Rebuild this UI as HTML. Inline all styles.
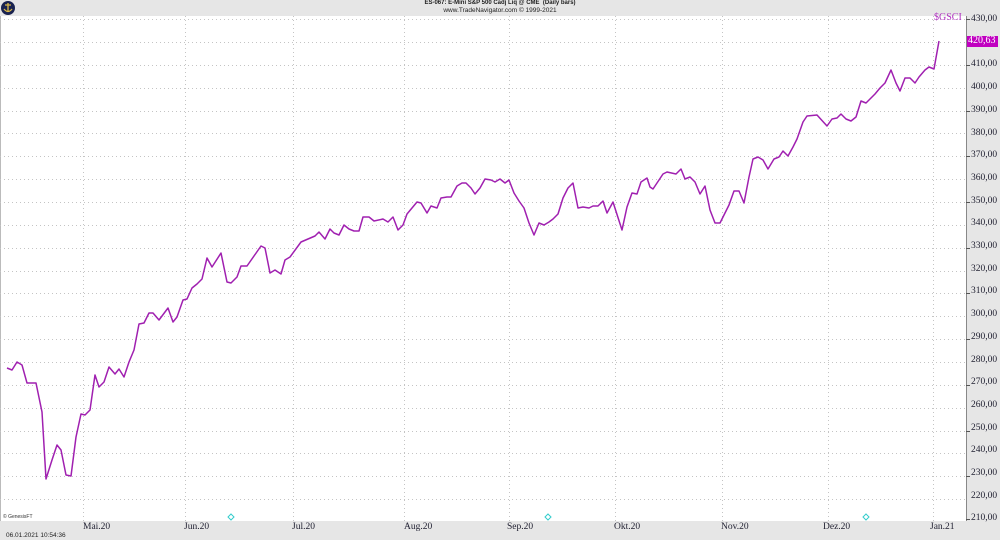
<!DOCTYPE html>
<html><head><meta charset="utf-8"><style>
body{margin:0;width:1000px;height:540px;overflow:hidden;background:#e6e6e6;position:relative;font-family:"Liberation Serif",serif}
.t{position:absolute;white-space:nowrap}
</style></head><body>
<svg width="1000" height="540" style="position:absolute;left:0;top:0" xmlns="http://www.w3.org/2000/svg">
<rect x="0" y="0" width="1000" height="540" fill="#e6e6e6"/>
<rect x="0" y="16" width="966" height="505" fill="#fff"/>
<line x1="0.5" y1="16" x2="0.5" y2="521" stroke="#bbb" stroke-width="1"/>
<line x1="966.5" y1="16" x2="966.5" y2="521" stroke="#888" stroke-width="1"/>
<g stroke="#c4c4c4" stroke-width="1" stroke-dasharray="1,3">
<line x1="0" x2="966" y1="19.5" y2="19.5"/><line x1="0" x2="966" y1="42.5" y2="42.5"/><line x1="0" x2="966" y1="65.5" y2="65.5"/><line x1="0" x2="966" y1="88.5" y2="88.5"/><line x1="0" x2="966" y1="111.5" y2="111.5"/><line x1="0" x2="966" y1="133.5" y2="133.5"/><line x1="0" x2="966" y1="156.5" y2="156.5"/><line x1="0" x2="966" y1="179.5" y2="179.5"/><line x1="0" x2="966" y1="202.5" y2="202.5"/><line x1="0" x2="966" y1="225.5" y2="225.5"/><line x1="0" x2="966" y1="248.5" y2="248.5"/><line x1="0" x2="966" y1="271.5" y2="271.5"/><line x1="0" x2="966" y1="293.5" y2="293.5"/><line x1="0" x2="966" y1="316.5" y2="316.5"/><line x1="0" x2="966" y1="339.5" y2="339.5"/><line x1="0" x2="966" y1="362.5" y2="362.5"/><line x1="0" x2="966" y1="385.5" y2="385.5"/><line x1="0" x2="966" y1="408.5" y2="408.5"/><line x1="0" x2="966" y1="431.5" y2="431.5"/><line x1="0" x2="966" y1="453.5" y2="453.5"/><line x1="0" x2="966" y1="476.5" y2="476.5"/><line x1="0" x2="966" y1="499.5" y2="499.5"/>
<line y1="16" y2="521" x1="83.5" x2="83.5"/><line y1="16" y2="521" x1="185.5" x2="185.5"/><line y1="16" y2="521" x1="293.5" x2="293.5"/><line y1="16" y2="521" x1="404.5" x2="404.5"/><line y1="16" y2="521" x1="509.5" x2="509.5"/><line y1="16" y2="521" x1="615.5" x2="615.5"/><line y1="16" y2="521" x1="722.5" x2="722.5"/><line y1="16" y2="521" x1="828.5" x2="828.5"/><line y1="16" y2="521" x1="933.5" x2="933.5"/>
</g>
<g stroke="#555" stroke-width="1">
<line x1="966" x2="970" y1="19.5" y2="19.5"/><line x1="966" x2="970" y1="65.5" y2="65.5"/><line x1="966" x2="970" y1="111.5" y2="111.5"/><line x1="966" x2="970" y1="156.5" y2="156.5"/><line x1="966" x2="970" y1="202.5" y2="202.5"/><line x1="966" x2="970" y1="248.5" y2="248.5"/><line x1="966" x2="970" y1="293.5" y2="293.5"/><line x1="966" x2="970" y1="339.5" y2="339.5"/><line x1="966" x2="970" y1="385.5" y2="385.5"/><line x1="966" x2="970" y1="431.5" y2="431.5"/><line x1="966" x2="970" y1="476.5" y2="476.5"/><line x1="966" x2="970" y1="519.5" y2="519.5"/>
</g>
<polyline fill="none" stroke="#a020b0" stroke-width="1.5" stroke-linejoin="round" points="7,368 12,370 17,362 22,365 27,383 36,383 42,412 46,479 52,460 57,445 61,450 66,475 71,476 76,437 81,414 85,415 90,410 95,375 99,387 104,382 109,367 115,374 119,369 124,377 129,362 134,350 139,324 144,323 149,313 153,313 159,320 168,308 173,322 177,317 183,300 187,299 192,288 197,284 202,279 207,258 212,267 221,253 227,282 231,283 237,277 241,266 247,266 261,246 265,248 270,273 275,270 281,274 285,260 290,257 301,242 315,236 319,232 325,239 330,229 334,233 339,235 344,225 349,229 354,231 359,231 363,217 369,217 374,221 383,219 388,222 393,217 398,230 403,225 407,214 412,208 417,202 421,203 427,213 431,206 437,208 441,198 447,197 451,197 457,186 462,183 466,183 471,188 475,194 480,188 485,179 491,180 495,182 500,179 505,183 509,180 514,193 519,201 524,208 529,223 534,235 539,223 544,225 549,222 553,219 558,214 563,198 568,188 573,183 578,208 583,207 589,208 593,206 598,206 603,201 607,213 613,202 622,230 627,207 632,193 637,194 641,182 647,178 650,187 653,189 663,174 667,172 676,174 681,169 685,179 690,177 695,182 700,194 705,186 710,210 715,223 720,223 729,205 734,191 739,191 744,203 749,177 753,159 758,157 763,160 768,169 774,159 779,157 783,151 788,156 793,147 797,139 803,122 807,116 817,115 827,126 832,119 837,118 841,114 846,119 851,121 856,117 861,101 866,103 870,99 875,94 880,88 885,83 891,70 896,83 900,91 905,78 910,78 915,83 919,77 925,70 929,67 934,69 939,41"/>
<g fill="none" stroke="#3cc" stroke-width="1">
<path d="M231,514 l3,3 -3,3 -3,-3z"/><path d="M548,514 l3,3 -3,3 -3,-3z"/><path d="M866,514 l3,3 -3,3 -3,-3z"/>
</g>
<circle cx="8" cy="8" r="7" fill="#1a2350"/>
<path d="M8,3 v9 M5,5 h6 M4,9 q4,5 8,0" stroke="#d9b84a" stroke-width="1.3" fill="none"/>
<rect x="967" y="36" width="31" height="11" fill="#c000c0"/>
</svg>
<div class="t" style="left:0;width:1000px;top:0;text-align:center;font:bold 6px 'Liberation Sans',sans-serif;color:#222">ES-067: E-Mini S&amp;P 500 Cadj Liq @ CME&nbsp; (Daily bars)</div>
<div class="t" style="left:0;width:1000px;top:7px;text-align:center;font:6.5px 'Liberation Sans',sans-serif;color:#222">www.TradeNavigator.com © 1999-2021</div>
<div class="t" style="left:934px;top:12px;font-size:10px;color:#b030c0">$GSCI</div>
<div class="t" style="left:968px;top:35px;font-size:10px;color:#fff">420,63</div>
<div style="position:absolute;left:971px;top:8px;font-size:9.5px;color:#223;line-height:22.7px">430,00<br><br>410,00<br>400,00<br>390,00<br>380,00<br>370,00<br>360,00<br>350,00<br>340,00<br>330,00<br>320,00<br>310,00<br>300,00<br>290,00<br>280,00<br>270,00<br>260,00<br>250,00<br>240,00<br>230,00<br>220,00<br>210,00</div>
<div class="t" style="left:3px;top:514px;font:5px 'Liberation Sans',sans-serif;color:#333">© GenesisFT</div>
<div class="t" style="left:6px;top:532px;font:6.5px 'Liberation Sans',sans-serif;color:#222">06.01.2021 10:54:36</div>
<div class="t" style="left:83px;top:522px;font-size:9.5px;color:#223">Mai.20</div>
<div class="t" style="left:184px;top:522px;font-size:9.5px;color:#223">Jun.20</div>
<div class="t" style="left:292px;top:522px;font-size:9.5px;color:#223">Jul.20</div>
<div class="t" style="left:404px;top:522px;font-size:9.5px;color:#223">Aug.20</div>
<div class="t" style="left:507px;top:522px;font-size:9.5px;color:#223">Sep.20</div>
<div class="t" style="left:614px;top:522px;font-size:9.5px;color:#223">Okt.20</div>
<div class="t" style="left:721px;top:522px;font-size:9.5px;color:#223">Nov.20</div>
<div class="t" style="left:823px;top:522px;font-size:9.5px;color:#223">Dez.20</div>
<div class="t" style="left:930px;top:522px;font-size:9.5px;color:#223">Jan.21</div>
</body></html>
